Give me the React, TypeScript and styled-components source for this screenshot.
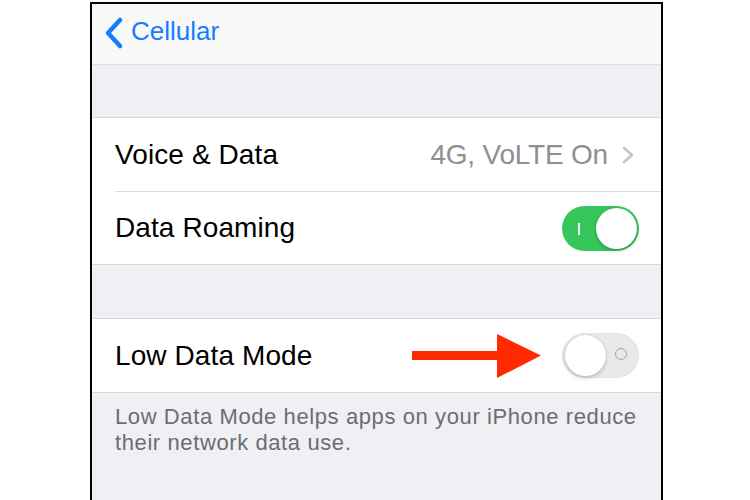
import { createGlobalStyle } from 'styled-components'
import styled from 'styled-components'
import type { FC } from 'react'

const GlobalStyle = createGlobalStyle`
  html, body {
    margin: 0;
    padding: 0;
    background: #ffffff;
  }
  body {
    font-family: 'Liberation Sans', Arial, sans-serif;
    -webkit-font-smoothing: antialiased;
  }
`

const Frame = styled.div`
  box-sizing: border-box;
  margin: 2px 0 0 90px;
  width: 573px;
  height: 498px;
  border: 2px solid #000;
  border-bottom: none;
  background: #efeff4;
  overflow: hidden;
`

const NavBar = styled.div`
  box-sizing: border-box;
  height: 61px;
  padding: 13px 0 0 12px;
  display: flex;
  align-items: flex-start;
  gap: 8px;
  background: #f8f8f8;
  border-bottom: 1px solid #dedee0;
`

const BackTitle = styled.span`
  font-size: 26px;
  color: #147efb;
  line-height: 29px;
`

const Spacer = styled.div<{ $h: number }>`
  height: ${({ $h }) => $h}px;
`

const Group = styled.div`
  background: #fff;
  border-top: 1px solid #d8d8dc;
  border-bottom: 1px solid #d8d8dc;
`

const Row = styled.div<{ $divider?: boolean }>`
  box-sizing: border-box;
  height: 73px;
  margin-left: 23px;
  padding-right: 22px;
  display: flex;
  align-items: center;
  border-top: ${({ $divider }) => ($divider ? '1px solid #dcdce0' : 'none')};
`

const Label = styled.span`
  font-size: 28px;
  color: #000;
  letter-spacing: 0.1px;
`

const Trailing = styled.div`
  margin-left: auto;
  display: flex;
  align-items: center;
`

const Detail = styled.span`
  font-size: 28px;
  color: #8e8e93;
  letter-spacing: -0.2px;
  margin-right: 14px;
`

const Track = styled.div<{ $on: boolean }>`
  position: relative;
  box-sizing: border-box;
  width: 77px;
  height: 45px;
  border-radius: 23px;
  background: ${({ $on }) => ($on ? '#35c759' : '#e9e9eb')};
  border: ${({ $on }) => ($on ? 'none' : '1.5px solid #e3e3e5')};
  display: flex;
  align-items: center;
  justify-content: ${({ $on }) => ($on ? 'flex-end' : 'flex-start')};
  padding: 0 2px;
`

const Knob = styled.div`
  width: 41px;
  height: 41px;
  border-radius: 50%;
  background: #fff;
  box-shadow: 0 2px 4px rgba(0, 0, 0, 0.18), 0 0 1px rgba(0, 0, 0, 0.2);
`

const OnMark = styled.span`
  position: absolute;
  left: 16px;
  top: 17px;
  width: 2px;
  height: 12px;
  background: #fff;
`

const OffMark = styled.span`
  position: absolute;
  right: 11px;
  top: 14px;
  width: 12px;
  height: 12px;
  box-sizing: border-box;
  border-radius: 50%;
  border: 1.6px solid #a3a3a8;
`

const Controls = styled.div`
  margin-left: auto;
  display: flex;
  align-items: center;
  gap: 20px;
`

const Footer = styled.p`
  margin: 0;
  padding: 11px 20px 0 23px;
  font-size: 22px;
  line-height: 26px;
  color: #6d6d72;
  letter-spacing: 0.6px;
`

const Toggle: FC<{ on: boolean }> = ({ on }) => (
  <Track $on={on}>
    {on ? <OnMark /> : <OffMark />}
    <Knob />
  </Track>
)

const BackChevron = () => (
  <svg width="19" height="32" viewBox="0 0 19 32">
    <polyline
      points="16,3 4,16 16,29"
      fill="none"
      stroke="#147efb"
      strokeWidth="4.5"
      strokeLinecap="round"
      strokeLinejoin="round"
    />
  </svg>
)

const DisclosureChevron = () => (
  <svg width="13" height="18" viewBox="0 0 13 18" style={{ marginRight: 4 }}>
    <polyline
      points="2,2 10,9 2,16"
      fill="none"
      stroke="#c4c4c9"
      strokeWidth="2.6"
      strokeLinecap="round"
      strokeLinejoin="round"
    />
  </svg>
)

const RedArrow = () => (
  <svg width="130" height="44" viewBox="0 0 130 44">
    <rect x="0" y="17" width="88" height="9" fill="#ff2a00" />
    <polygon points="85,0 129,21.5 85,44" fill="#ff2a00" />
  </svg>
)

export default function App() {
  return (
    <>
      <GlobalStyle />
      <Frame>
        <NavBar>
          <BackChevron />
          <BackTitle>Cellular</BackTitle>
        </NavBar>
        <Spacer $h={52} />
        <Group>
          <Row>
            <Label>Voice &amp; Data</Label>
            <Trailing>
              <Detail>4G, VoLTE On</Detail>
              <DisclosureChevron />
            </Trailing>
          </Row>
          <Row $divider>
            <Label>Data Roaming</Label>
            <Trailing>
              <Toggle on />
            </Trailing>
          </Row>
        </Group>
        <Spacer $h={53} />
        <Group>
          <Row>
            <Label>Low Data Mode</Label>
            <Controls>
              <RedArrow />
              <Toggle on={false} />
            </Controls>
          </Row>
        </Group>
        <Footer>
          Low Data Mode helps apps on your iPhone reduce their network data use.
        </Footer>
      </Frame>
    </>
  )
}
